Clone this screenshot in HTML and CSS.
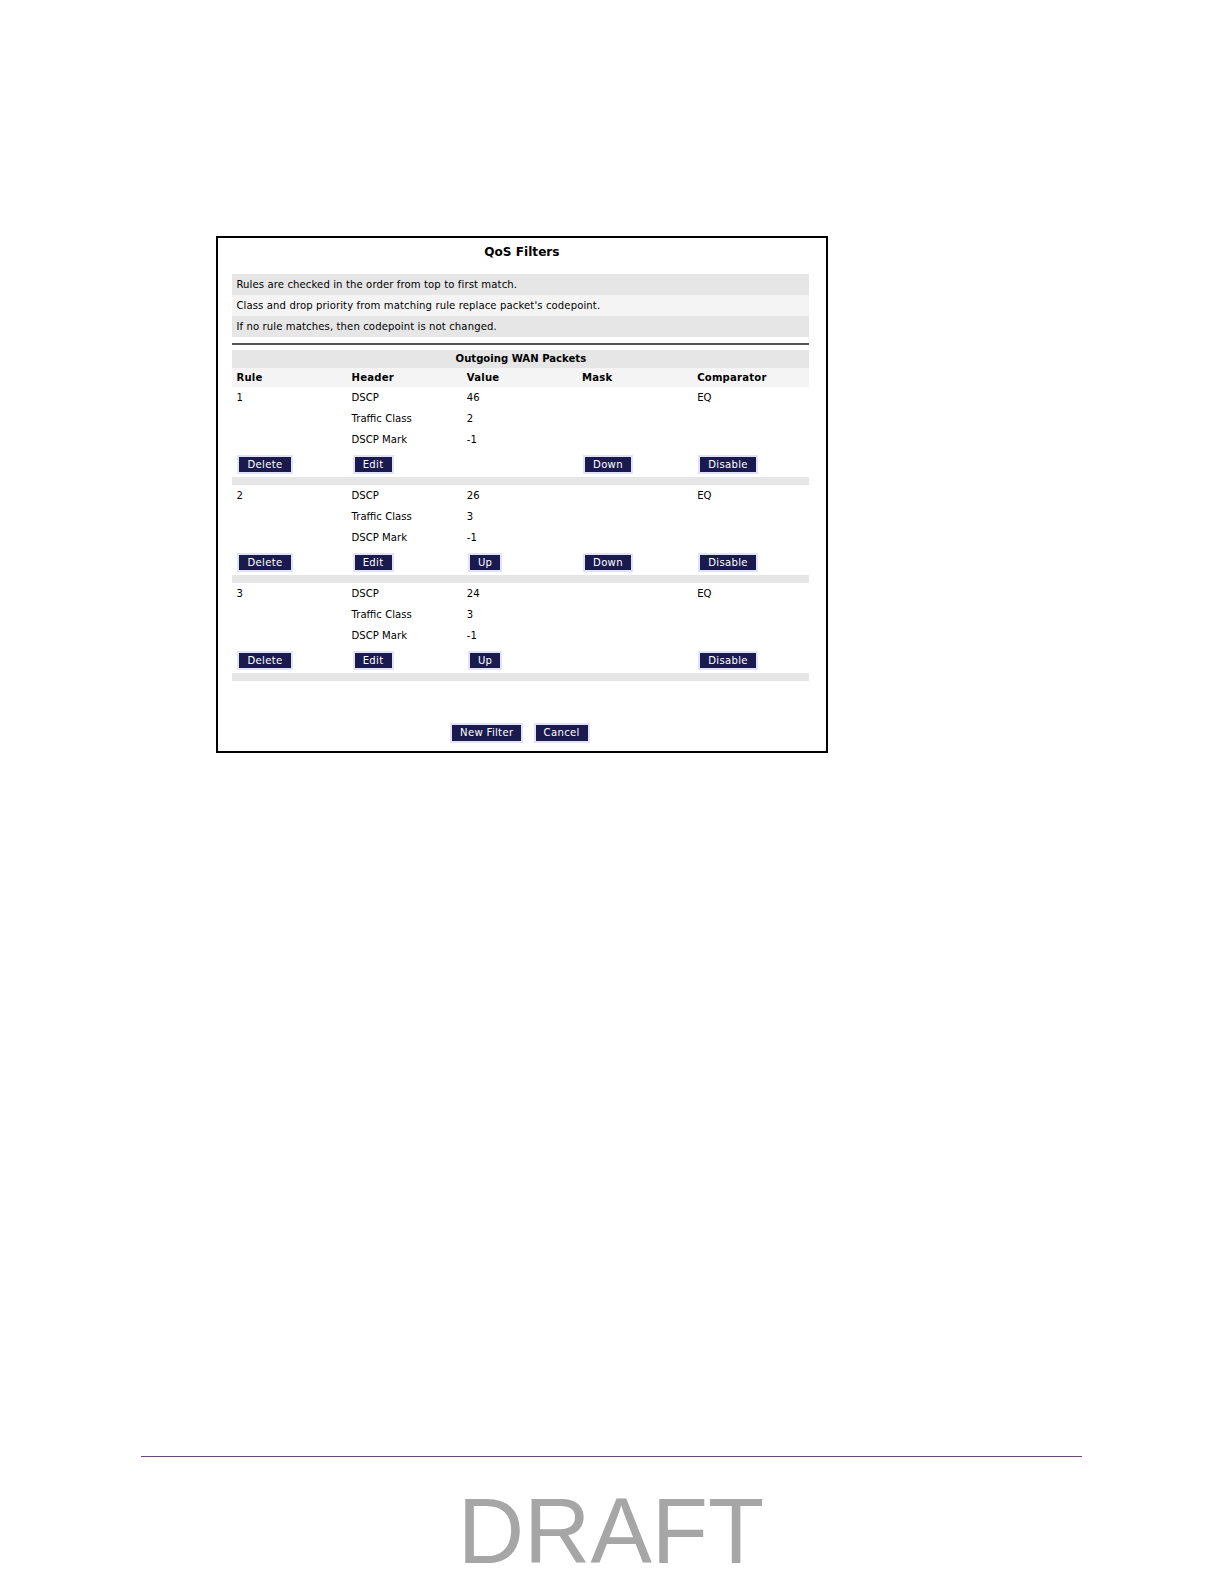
FILE: index.html
```html
<!DOCTYPE html>
<html>
<head>
<meta charset="utf-8">
<title>QoS Filters</title>
<link rel="stylesheet" href="styles.css">
</head>
<body>
<div class="page">
  <div class="panel">
    <div class="title">QoS Filters</div>
    <div class="info">
      <div class="info-row dark">Rules are checked in the order from top to first match.</div>
      <div class="info-row light">Class and drop priority from matching rule replace packet's codepoint.</div>
      <div class="info-row dark">If no rule matches, then codepoint is not changed.</div>
    </div>
    <div class="rule-line"></div>
    <div class="table">
      <div class="caption">Outgoing WAN Packets</div>
      <div class="grid head">
        <div class="cell">Rule</div>
        <div class="cell">Header</div>
        <div class="cell">Value</div>
        <div class="cell">Mask</div>
        <div class="cell">Comparator</div>
      </div>

      <div class="grid rule">
        <div class="cell">1</div><div class="cell">DSCP</div><div class="cell">46</div><div class="cell"></div><div class="cell">EQ</div>
        <div class="cell"></div><div class="cell">Traffic Class</div><div class="cell">2</div><div class="cell"></div><div class="cell"></div>
        <div class="cell"></div><div class="cell">DSCP Mark</div><div class="cell">-1</div><div class="cell"></div><div class="cell"></div>
        <div class="cell btncell"><span class="btn">Delete</span></div>
        <div class="cell btncell"><span class="btn">Edit</span></div>
        <div class="cell btncell"></div>
        <div class="cell btncell"><span class="btn">Down</span></div>
        <div class="cell btncell"><span class="btn">Disable</span></div>
      </div>
      <div class="sep"></div>

      <div class="grid rule">
        <div class="cell">2</div><div class="cell">DSCP</div><div class="cell">26</div><div class="cell"></div><div class="cell">EQ</div>
        <div class="cell"></div><div class="cell">Traffic Class</div><div class="cell">3</div><div class="cell"></div><div class="cell"></div>
        <div class="cell"></div><div class="cell">DSCP Mark</div><div class="cell">-1</div><div class="cell"></div><div class="cell"></div>
        <div class="cell btncell"><span class="btn">Delete</span></div>
        <div class="cell btncell"><span class="btn">Edit</span></div>
        <div class="cell btncell"><span class="btn">Up</span></div>
        <div class="cell btncell"><span class="btn">Down</span></div>
        <div class="cell btncell"><span class="btn">Disable</span></div>
      </div>
      <div class="sep"></div>

      <div class="grid rule">
        <div class="cell">3</div><div class="cell">DSCP</div><div class="cell">24</div><div class="cell"></div><div class="cell">EQ</div>
        <div class="cell"></div><div class="cell">Traffic Class</div><div class="cell">3</div><div class="cell"></div><div class="cell"></div>
        <div class="cell"></div><div class="cell">DSCP Mark</div><div class="cell">-1</div><div class="cell"></div><div class="cell"></div>
        <div class="cell btncell"><span class="btn">Delete</span></div>
        <div class="cell btncell"><span class="btn">Edit</span></div>
        <div class="cell btncell"><span class="btn">Up</span></div>
        <div class="cell btncell"></div>
        <div class="cell btncell"><span class="btn">Disable</span></div>
      </div>
      <div class="sep"></div>
    </div>
    <div class="actions">
      <span class="btn">New Filter</span>
      <span class="btn">Cancel</span>
    </div>
  </div>
  <div class="footer">
    <div class="footer-line"></div>
    <div class="draft">DRAFT</div>
  </div>
</div>
</body>
</html>
```

FILE: styles.css
```css
html, body {
  margin: 0;
  padding: 0;
  background: #ffffff;
  overflow: hidden;
}

.page {
  zoom: 1.0105;
  padding-top: 234px;
  font-family: "DejaVu Sans", Verdana, sans-serif;
  color: #000;
}

.panel {
  margin-left: 214px;
  width: 571px;
  height: 502px;
  border: 2px solid #000;
  padding: 5px 16px 0 14px;
}

.title {
  text-align: center;
  font-weight: bold;
  font-size: 12px;
  line-height: 16px;
  height: 16px;
  padding-left: 2px;
}

.info {
  margin-top: 14px;
}

.info-row {
  height: 21px;
  line-height: 22px;
  font-size: 10px;
  padding-left: 4px;
  white-space: nowrap;
  letter-spacing: 0.1px;
}

.info-row.dark { background: #e6e6e6; }
.info-row.light { background: #f4f4f4; }

.rule-line {
  margin-top: 5px;
  height: 2px;
  background: #555555;
}

.table {
  margin-top: 5px;
}

.caption {
  height: 18px;
  line-height: 18px;
  background: #e6e6e6;
  text-align: center;
  font-weight: bold;
  font-size: 10px;
}

.grid {
  display: grid;
  grid-template-columns: 114px 114px 114px 114px 115px;
}

.head {
  background: #f4f4f4;
  height: 19px;
  font-weight: bold;
  font-size: 10px;
}

.head .cell {
  line-height: 20px;
  letter-spacing: 0.2px;
}

.rule {
  grid-template-rows: 21px 21px 21px 26px;
  font-size: 10px;
}

.cell {
  padding-left: 4px;
  line-height: 22px;
  white-space: nowrap;
}

.btncell {
  padding-left: 5px;
  display: flex;
  align-items: center;
  padding-top: 1px;
}

.btn {
  display: inline-block;
  height: 15px;
  line-height: 15px;
  padding: 0 8px;
  background: #1a1a4f;
  color: #ffffff;
  border: 2px solid #e2e2f8;
  font-family: "DejaVu Sans", Verdana, sans-serif;
  font-size: 10px;
  letter-spacing: 0.3px;
  white-space: nowrap;
}

.sep {
  height: 8px;
  background: #e6e6e6;
}

.actions {
  margin-top: 42px;
  display: flex;
  justify-content: center;
  gap: 10px;
  padding-right: 2px;
}

.footer {
  margin-top: 696px;
  margin-left: 140px;
  width: 931px;
}

.footer-line {
  height: 1px;
  background: #6a4a78;
}

.draft {
  margin-top: 24px;
  text-align: center;
  font-family: "Liberation Sans", Arial, sans-serif;
  font-size: 91px;
  line-height: 100px;
  color: #a6a6a6;
  padding-right: 2px;
}
```
